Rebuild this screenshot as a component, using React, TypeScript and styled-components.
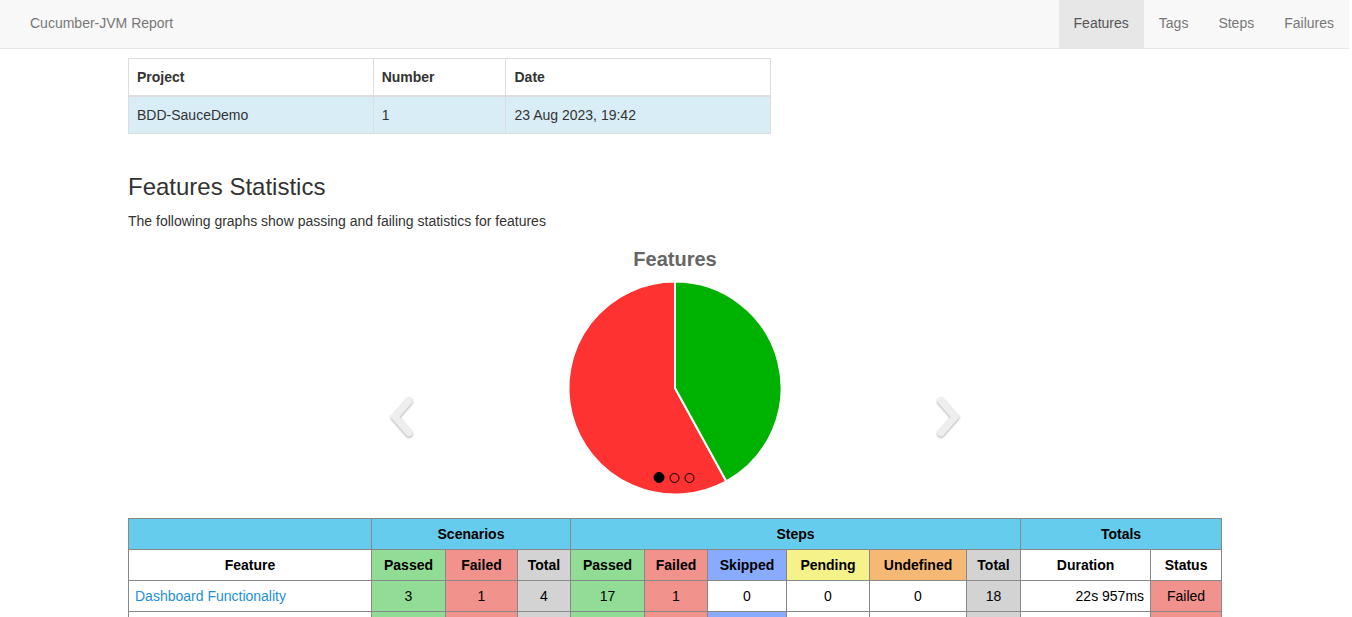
import React from "react";
import styled, { createGlobalStyle } from "styled-components";

const GlobalStyle = createGlobalStyle`
  html { overflow-y: scroll; }
  html::-webkit-scrollbar { width: 3px; }
  html::-webkit-scrollbar-track { background: #f1f1f1; }
  html::-webkit-scrollbar-thumb { background: #c1c1c1; }
  body {
    margin: 0;
    font-family: "Liberation Sans", Arial, Helvetica, sans-serif;
    font-size: 14px;
    line-height: 1.42857;
    color: #333;
    background: #fff;
  }
  * { box-sizing: border-box; }
`;

const Navbar = styled.nav`
  display: flex;
  justify-content: space-between;
  align-items: stretch;
  height: 49px;
  margin-right: 3px;
  background: #f8f8f8;
  border-bottom: 1px solid #e7e7e7;
  padding: 0 0 0 15px;
`;

const Brand = styled.a`
  display: block;
  padding: 13px 15px 15px;
  font-size: 14px;
  line-height: 20px;
  color: #777;
  text-decoration: none;
`;

const NavList = styled.ul`
  display: flex;
  list-style: none;
  margin: 0;
  padding: 0;
`;

const NavItem = styled.li<{ $active?: boolean }>`
  padding: 13px 15px 15px;
  line-height: 20px;
  color: ${(p) => (p.$active ? "#555" : "#777")};
  background: ${(p) => (p.$active ? "#e7e7e7" : "transparent")};
`;

const Main = styled.main`
  width: 1093px;
  margin: 0 0 0 128px;
  padding: 9px 0 260px;
`;

const InfoTable = styled.table`
  width: 643px;
  border-collapse: collapse;
  border: 1px solid #ddd;
  margin-bottom: 40px;
`;

const InfoTh = styled.th<{ $w: number }>`
  width: ${(p) => p.$w}px;
  text-align: left;
  padding: 9px 8px 7px;
  height: 37px;
  border: 1px solid #ddd;
  border-bottom: 2px solid #ddd;
  font-weight: bold;
`;

const InfoTd = styled.td`
  padding: 9px 8px 7px;
  height: 37px;
  border: 1px solid #ddd;
  background: #d9edf7;
`;

const Heading = styled.h3`
  font-size: 24px;
  font-weight: 500;
  line-height: 1.1;
  margin: 20px 0 12px;
  color: #333;
`;

const Lead = styled.p`
  margin: 0 0 8px;
`;

const Carousel = styled.div`
  position: relative;
  display: flex;
  justify-content: center;
  height: 260px;
  margin-bottom: 18px;
`;

const Arrow = styled.svg<{ $side: "left" | "right" }>`
  position: absolute;
  top: 156px;
  ${(p) => (p.$side === "left" ? "left: calc(50% - 288px);" : "left: calc(50% + 258px);")}
  filter: drop-shadow(0 1px 1px rgba(0, 0, 0, 0.35));
`;

const Indicators = styled.div`
  position: absolute;
  top: 232px;
  left: 50%;
  transform: translateX(-50%);
  margin-left: -1px;
  display: flex;
  align-items: center;
  gap: 5px;
`;

const Dot = styled.span<{ $active?: boolean }>`
  display: block;
  width: ${(p) => (p.$active ? 11 : 10)}px;
  height: ${(p) => (p.$active ? 11 : 10)}px;
  border-radius: 50%;
  border: 1px solid #000;
  background: ${(p) => (p.$active ? "#000" : "transparent")};
`;

const StatsTable = styled.table`
  width: 1093px;
  table-layout: fixed;
  border-collapse: collapse;
  color: #000;
`;

type Tone = "head" | "passed" | "failed" | "skipped" | "pending" | "undefined" | "total" | "plain";

const toneColor: Record<Tone, string> = {
  head: "#66ccee",
  passed: "#92dd96",
  failed: "#f2928c",
  skipped: "#88aaff",
  pending: "#f5f28a",
  undefined: "#f5b975",
  total: "#d3d3d3",
  plain: "#fff",
};

const Cell = styled.td<{ $tone: Tone; $bold?: boolean; $align?: string }>`
  height: 31px;
  padding: 1px 6px 0;
  border: 1px solid #888;
  background: ${(p) => toneColor[p.$tone]};
  font-weight: ${(p) => (p.$bold ? "bold" : "normal")};
  text-align: ${(p) => p.$align || "center"};
  white-space: nowrap;
`;

const FeatureLink = styled.a`
  color: #1e8fdc;
  text-decoration: none;
`;

const colWidths = [243, 74, 72, 53, 74, 63, 79, 83, 97, 54, 130, 71];

type Row = {
  name: string;
  sc: [number, number, number];
  st: [number, number, number, number, number, number];
  duration: string;
  status: string;
};

const rows: Row[] = [
  { name: "Dashboard Functionality", sc: [3, 1, 4], st: [17, 1, 0, 0, 0, 18], duration: "22s 957ms", status: "Failed" },
  { name: "Login Functionality", sc: [2, 1, 3], st: [9, 1, 2, 0, 0, 12], duration: "14s 305ms", status: "Failed" },
  { name: "Checkout Functionality", sc: [0, 0, 0], st: [0, 0, 0, 0, 0, 0], duration: "0ms", status: "Passed" },
];

const stepTones: Tone[] = ["passed", "failed", "skipped", "pending", "undefined", "total"];

function PieChart() {
  const cx = 200;
  const cy = 148;
  const r = 106.5;
  const frac = 0.42;
  const a = frac * 2 * Math.PI;
  const ex = cx + r * Math.sin(a);
  const ey = cy - r * Math.cos(a);
  return (
    <svg width="400" height="260" viewBox="0 0 400 260">
      <text x="200" y="26" textAnchor="middle" fontFamily="Liberation Sans, Arial, sans-serif" fontWeight="bold" fontSize="20" fill="#666">
        Features
      </text>
      <path d={`M${cx},${cy} L${ex},${ey} A${r},${r} 0 1 1 ${cx},${cy - r} Z`} fill="#ff3232" stroke="#fff" strokeWidth="2" strokeLinejoin="round" />
      <path d={`M${cx},${cy} L${cx},${cy - r} A${r},${r} 0 0 1 ${ex},${ey} Z`} fill="#00b200" stroke="#fff" strokeWidth="2" strokeLinejoin="round" />
    </svg>
  );
}

export default function App() {
  return (
    <>
      <GlobalStyle />
      <Navbar>
        <Brand href="#">Cucumber-JVM Report</Brand>
        <NavList>
          <NavItem $active>Features</NavItem>
          <NavItem>Tags</NavItem>
          <NavItem>Steps</NavItem>
          <NavItem>Failures</NavItem>
        </NavList>
      </Navbar>
      <Main>
        <InfoTable>
          <thead>
            <tr>
              <InfoTh $w={245}>Project</InfoTh>
              <InfoTh $w={133}>Number</InfoTh>
              <InfoTh $w={265}>Date</InfoTh>
            </tr>
          </thead>
          <tbody>
            <tr>
              <InfoTd>BDD-SauceDemo</InfoTd>
              <InfoTd>1</InfoTd>
              <InfoTd>23 Aug 2023, 19:42</InfoTd>
            </tr>
          </tbody>
        </InfoTable>

        <Heading>Features Statistics</Heading>
        <Lead>The following graphs show passing and failing statistics for features</Lead>

        <Carousel>
          <PieChart />
          <Arrow $side="left" width="30" height="44" viewBox="0 0 30 44">
            <polyline points="22,5 8,21 22,37" fill="none" stroke="#eeeeee" strokeWidth="7" strokeLinecap="round" strokeLinejoin="miter" />
          </Arrow>
          <Arrow $side="right" width="30" height="44" viewBox="0 0 30 44">
            <polyline points="8,5 22,21 8,37" fill="none" stroke="#eeeeee" strokeWidth="7" strokeLinecap="round" strokeLinejoin="miter" />
          </Arrow>
          <Indicators>
            <Dot $active />
            <Dot />
            <Dot />
          </Indicators>
        </Carousel>

        <StatsTable>
          <colgroup>
            {colWidths.map((w, i) => (
              <col key={i} style={{ width: w }} />
            ))}
          </colgroup>
          <thead>
            <tr>
              <Cell as="th" $tone="head" $bold />
              <Cell as="th" $tone="head" $bold colSpan={3}>Scenarios</Cell>
              <Cell as="th" $tone="head" $bold colSpan={6}>Steps</Cell>
              <Cell as="th" $tone="head" $bold colSpan={2}>Totals</Cell>
            </tr>
            <tr>
              <Cell as="th" $tone="plain" $bold>Feature</Cell>
              <Cell as="th" $tone="passed" $bold>Passed</Cell>
              <Cell as="th" $tone="failed" $bold>Failed</Cell>
              <Cell as="th" $tone="total" $bold>Total</Cell>
              <Cell as="th" $tone="passed" $bold>Passed</Cell>
              <Cell as="th" $tone="failed" $bold>Failed</Cell>
              <Cell as="th" $tone="skipped" $bold>Skipped</Cell>
              <Cell as="th" $tone="pending" $bold>Pending</Cell>
              <Cell as="th" $tone="undefined" $bold>Undefined</Cell>
              <Cell as="th" $tone="total" $bold>Total</Cell>
              <Cell as="th" $tone="plain" $bold>Duration</Cell>
              <Cell as="th" $tone="plain" $bold>Status</Cell>
            </tr>
          </thead>
          <tbody>
            {rows.map((r) => (
              <tr key={r.name}>
                <Cell $tone="plain" $align="left">
                  <FeatureLink href="#">{r.name}</FeatureLink>
                </Cell>
                <Cell $tone={r.sc[0] > 0 ? "passed" : "plain"}>{r.sc[0]}</Cell>
                <Cell $tone={r.sc[1] > 0 ? "failed" : "plain"}>{r.sc[1]}</Cell>
                <Cell $tone="total">{r.sc[2]}</Cell>
                {r.st.map((v, i) => (
                  <Cell key={i} $tone={stepTones[i] === "total" || v > 0 ? stepTones[i] : "plain"}>
                    {v}
                  </Cell>
                ))}
                <Cell $tone="plain" $align="right">{r.duration}</Cell>
                <Cell $tone={r.status === "Failed" ? "failed" : "passed"}>{r.status}</Cell>
              </tr>
            ))}
          </tbody>
        </StatsTable>
      </Main>
    </>
  );
}
